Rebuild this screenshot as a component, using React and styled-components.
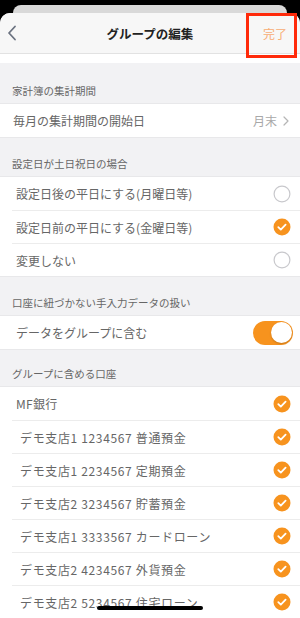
import React from "react";
import styled, { createGlobalStyle } from "styled-components";

const Global = createGlobalStyle`
  html, body { margin: 0; padding: 0; background: #000; }
  body { font-family: "Noto Sans CJK JP", "Noto Sans", sans-serif; }
  * { box-sizing: border-box; }
`;

const Page = styled.div`
  position: relative;
  width: 300px;
  height: 618px;
  overflow: hidden;
  background: #000;
  padding-top: 5px;
`;

const BackCard = styled.div`
  margin: 0 13px;
  height: 8px;
  background: #d9d9d9;
  border-radius: 9px 9px 0 0;
`;

const Sheet = styled.div`
  background: #f2f2f4;
  border-radius: 10px 10px 0 0;
  overflow: hidden;
  height: 620px;
`;

const NavBar = styled.div`
  height: 41px;
  background: #f7f7f7;
  border-bottom: 1px solid #e2e2e2;
  display: grid;
  grid-template-columns: 60px 1fr 60px;
  align-items: center;
`;

const BackBtn = styled.div`
  padding-left: 7px;
  display: flex;
  align-items: center;
`;

const Title = styled.div`
  text-align: center;
  font-size: 12.5px;
  font-weight: 700;
  color: #222;
`;

const Done = styled.div`
  text-align: right;
  padding-right: 13px;
  font-size: 12px;
  color: #f8ad74;
`;

const WhiteStrip = styled.div`
  height: 9px;
  background: #fff;
`;

const Header = styled.div`
  height: ${(p) => p.$h || 40}px;
  display: flex;
  align-items: flex-end;
  padding: 0 12px 4px;
  font-size: 10.5px;
  line-height: 16px;
  color: #666;
`;

const Group = styled.div`
  background: #fff;
  border-top: 1px solid #e8e8ea;
  border-bottom: 1px solid #e8e8ea;
`;

const Row = styled.div`
  height: ${(p) => p.$h || 33}px;
  margin-left: 12px;
  padding-left: ${(p) => p.$indent || 0}px;
  padding-right: 9px;
  display: flex;
  align-items: center;
  justify-content: space-between;
  font-size: 12px;
  color: #666;
  & + & {
    border-top: 1px solid #ececec;
  }
`;

const Label = styled.span`
  white-space: nowrap;
  letter-spacing: ${(p) => p.$ls || 0}px;
`;

const Value = styled.span`
  display: flex;
  align-items: center;
  gap: 6px;
  color: #a8a8a8;
  font-size: 12px;
  padding-right: 2px;
`;

const Toggle = styled.div`
  width: 40px;
  height: 24px;
  border-radius: 12px;
  background: #f7931e;
  padding: 1.5px;
  display: flex;
  justify-content: flex-end;
  margin-right: -2px;
`;

const Knob = styled.div`
  width: 21px;
  height: 21px;
  border-radius: 50%;
  background: #fff;
  box-shadow: 0 1px 2px rgba(0, 0, 0, 0.2);
`;

const Highlight = styled.div`
  position: absolute;
  left: 246px;
  top: 13px;
  width: 51px;
  height: 45px;
  border: 3px solid #ff2a0a;
`;

const HomeIndicator = styled.div`
  position: absolute;
  left: 97px;
  top: 606px;
  width: 106px;
  height: 4px;
  border-radius: 2px;
  background: #000;
`;

const Check = ({ on }) =>
  on ? (
    <svg width="18" height="18" viewBox="0 0 18 18">
      <circle cx="9" cy="9" r="8.5" fill="#f7931e" />
      <path d="M5.3 9.2 L7.8 11.6 L12.6 6.6" fill="none" stroke="#fff" strokeWidth="1.8" strokeLinecap="round" strokeLinejoin="round" />
    </svg>
  ) : (
    <svg width="18" height="18" viewBox="0 0 18 18">
      <circle cx="9" cy="9" r="7.9" fill="#fff" stroke="#c8c8cc" strokeWidth="1.2" />
    </svg>
  );

const Chevron = () => (
  <svg width="6" height="10" viewBox="0 0 6 10">
    <path d="M1 1 L5 5 L1 9" fill="none" stroke="#b5b5b5" strokeWidth="1.2" strokeLinecap="round" strokeLinejoin="round" />
  </svg>
);

const BackIcon = () => (
  <svg width="10" height="16" viewBox="0 0 10 16">
    <path d="M8 1.5 L2 8 L8 14.5" fill="none" stroke="#6b7280" strokeWidth="1.8" strokeLinecap="round" strokeLinejoin="round" />
  </svg>
);

const options = [
  { label: "設定日後の平日にする(月曜日等)", on: false },
  { label: "設定日前の平日にする(金曜日等)", on: true },
  { label: "変更しない", on: false },
];

const accounts = [
  { label: "MF銀行", indent: 4, ls: 0.3 },
  { label: "デモ支店1 1234567 普通預金", indent: 8, ls: 0.65 },
  { label: "デモ支店1 2234567 定期預金", indent: 8, ls: 0.65 },
  { label: "デモ支店2 3234567 貯蓄預金", indent: 8, ls: 0.65 },
  { label: "デモ支店1 3333567 カードローン", indent: 8, ls: 0.65 },
  { label: "デモ支店2 4234567 外貨預金", indent: 8, ls: 0.65 },
  { label: "デモ支店2 5234567 住宅ローン", indent: 8, ls: 0.65 },
];

export default function App() {
  return (
    <>
      <Global />
      <Page>
        <BackCard />
        <Sheet>
          <NavBar>
            <BackBtn>
              <BackIcon />
            </BackBtn>
            <Title>グループの編集</Title>
            <Done>完了</Done>
          </NavBar>
          <WhiteStrip />

          <Header>家計簿の集計期間</Header>
          <Group>
            <Row $indent={1}>
              <Label>毎月の集計期間の開始日</Label>
              <Value>
                月末 <Chevron />
              </Value>
            </Row>
          </Group>

          <Header $h={38}>設定日が土日祝日の場合</Header>
          <Group>
            {options.map((o) => (
              <Row key={o.label} $indent={4}>
                <Label>{o.label}</Label>
                <Check on={o.on} />
              </Row>
            ))}
          </Group>

          <Header $h={38}>口座に紐づかない手入力データの扱い</Header>
          <Group>
            <Row $indent={4}>
              <Label>データをグループに含む</Label>
              <Toggle>
                <Knob />
              </Toggle>
            </Row>
          </Group>

          <Header $h={36}>グループに含める口座</Header>
          <Group>
            {accounts.map((a) => (
              <Row key={a.label} $indent={a.indent}>
                <Label $ls={a.ls}>{a.label}</Label>
                <Check on />
              </Row>
            ))}
          </Group>
        </Sheet>
        <Highlight />
        <HomeIndicator />
      </Page>
    </>
  );
}
